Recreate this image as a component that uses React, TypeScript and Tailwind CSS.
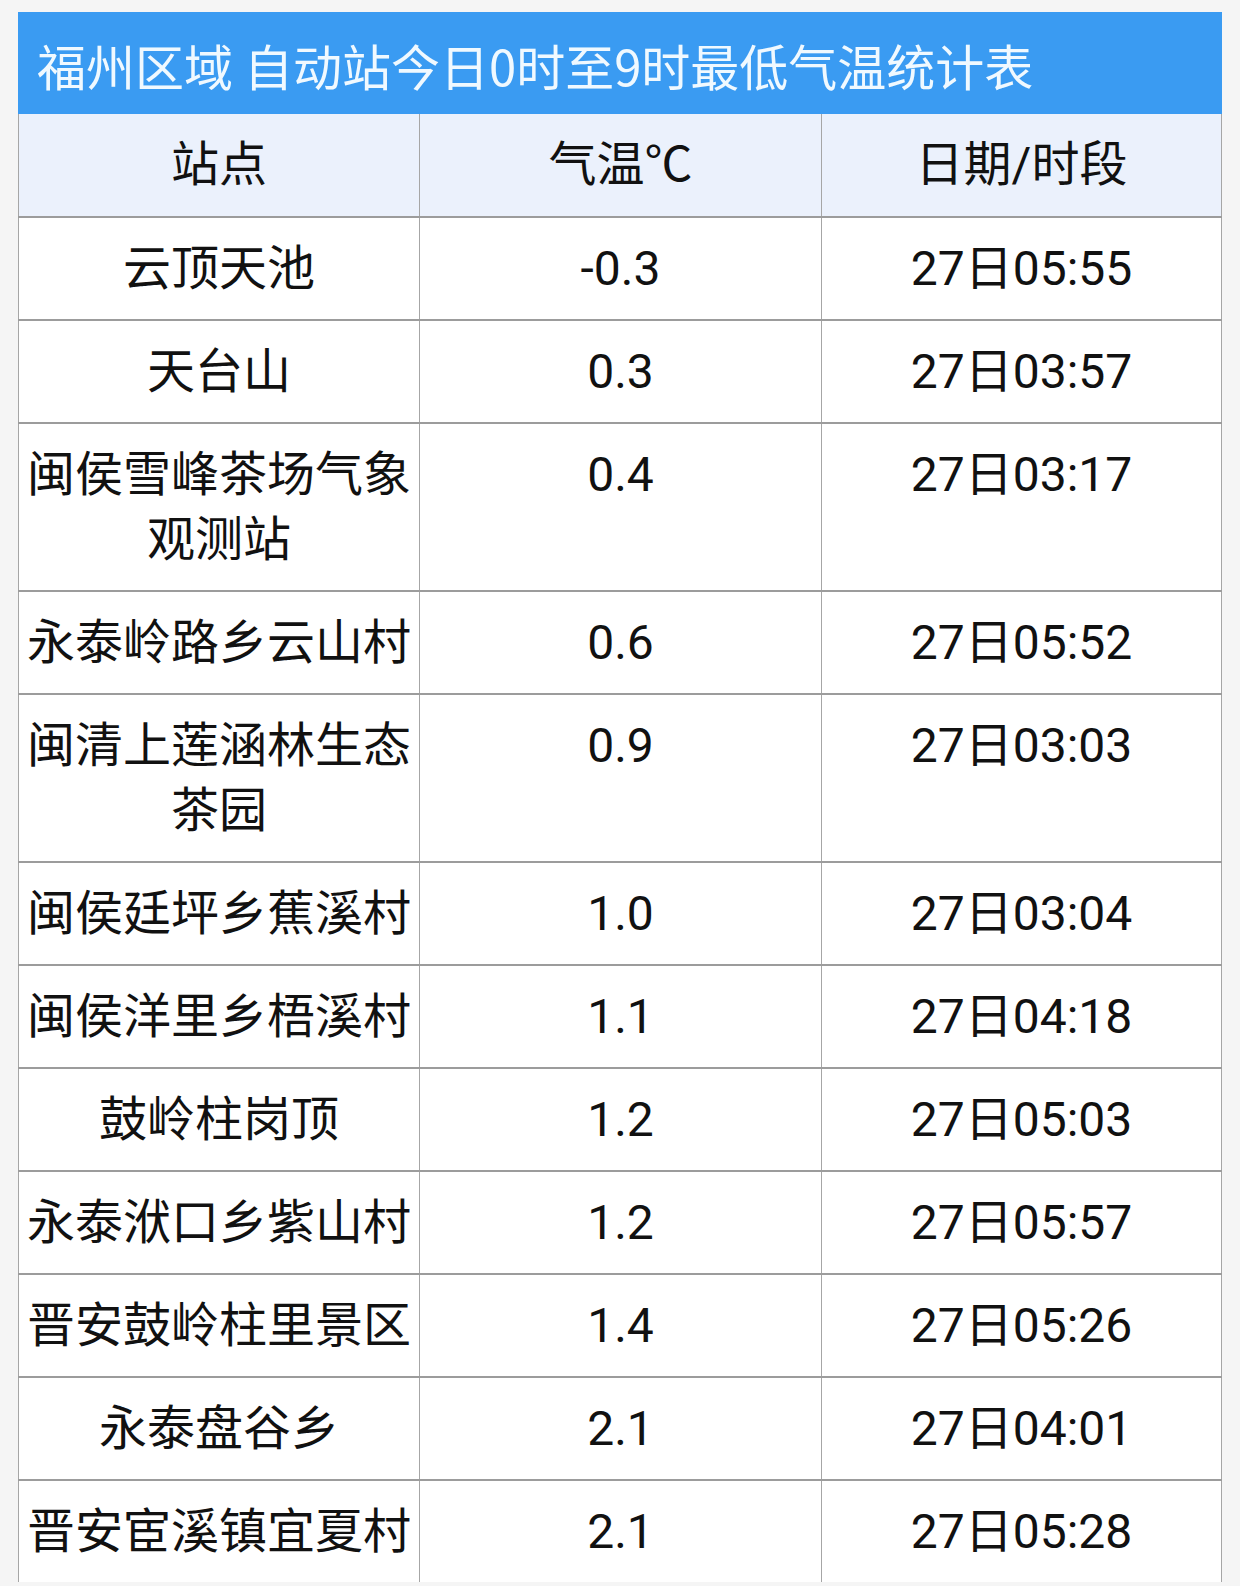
import React from 'react';

type Row = { station: string; temp: string; time: string };

const rows: Row[] = [
	{ station: '云顶天池', temp: '-0.3', time: '27日05:55' },
	{ station: '天台山', temp: '0.3', time: '27日03:57' },
	{ station: '闽侯雪峰茶场气象观测站', temp: '0.4', time: '27日03:17' },
	{ station: '永泰岭路乡云山村', temp: '0.6', time: '27日05:52' },
	{ station: '闽清上莲涵林生态茶园', temp: '0.9', time: '27日03:03' },
	{ station: '闽侯廷坪乡蕉溪村', temp: '1.0', time: '27日03:04' },
	{ station: '闽侯洋里乡梧溪村', temp: '1.1', time: '27日04:18' },
	{ station: '鼓岭柱岗顶', temp: '1.2', time: '27日05:03' },
	{ station: '永泰洑口乡紫山村', temp: '1.2', time: '27日05:57' },
	{ station: '晋安鼓岭柱里景区', temp: '1.4', time: '27日05:26' },
	{ station: '永泰盘谷乡', temp: '2.1', time: '27日04:01' },
	{ station: '晋安宦溪镇宜夏村', temp: '2.1', time: '27日05:28' },
];

const App = () => {
	return (
		<div className="h-[1586px] w-[1240px] overflow-hidden bg-[#f5f5f5] pt-3 pl-[18px] font-['Roboto','Noto_Sans_CJK_SC',sans-serif] text-[#111]">
			<div className="w-[1204px]">
				<div className="flex h-[102px] items-center bg-[#3a9bf2] pt-[3px] pl-[19px] font-['Noto_Sans_CJK_SC',sans-serif] text-[49px] text-[#f0f9ff]">
					福州区域 自动站今日0时至9时最低气温统计表
				</div>
				<div className="grid grid-cols-[401px_402px_401px] bg-[#ebf1fc] text-[48px] leading-[102px]">
					<div className="border-l border-[#a6a6a6] text-center">站点</div>
					<div className="border-l border-[#a6a6a6] text-center">气温℃</div>
					<div className="border-r border-l border-[#a6a6a6] text-center">日期/时段</div>
				</div>
				{rows.map((row, i) => (
					<div
						key={i}
						className="grid grid-cols-[401px_402px_401px] border-t-2 border-[#9c9c9c] bg-white text-[48px] leading-[65px]"
					>
						<div className="border-l border-[#a6a6a6] px-1 py-[18px] text-center">
							{row.station}
						</div>
						<div className="border-l border-[#a6a6a6] py-[18px] text-center">{row.temp}</div>
						<div className="border-r border-l border-[#a6a6a6] py-[18px] text-center">
							{row.time}
						</div>
					</div>
				))}
			</div>
		</div>
	);
};

export default App;
